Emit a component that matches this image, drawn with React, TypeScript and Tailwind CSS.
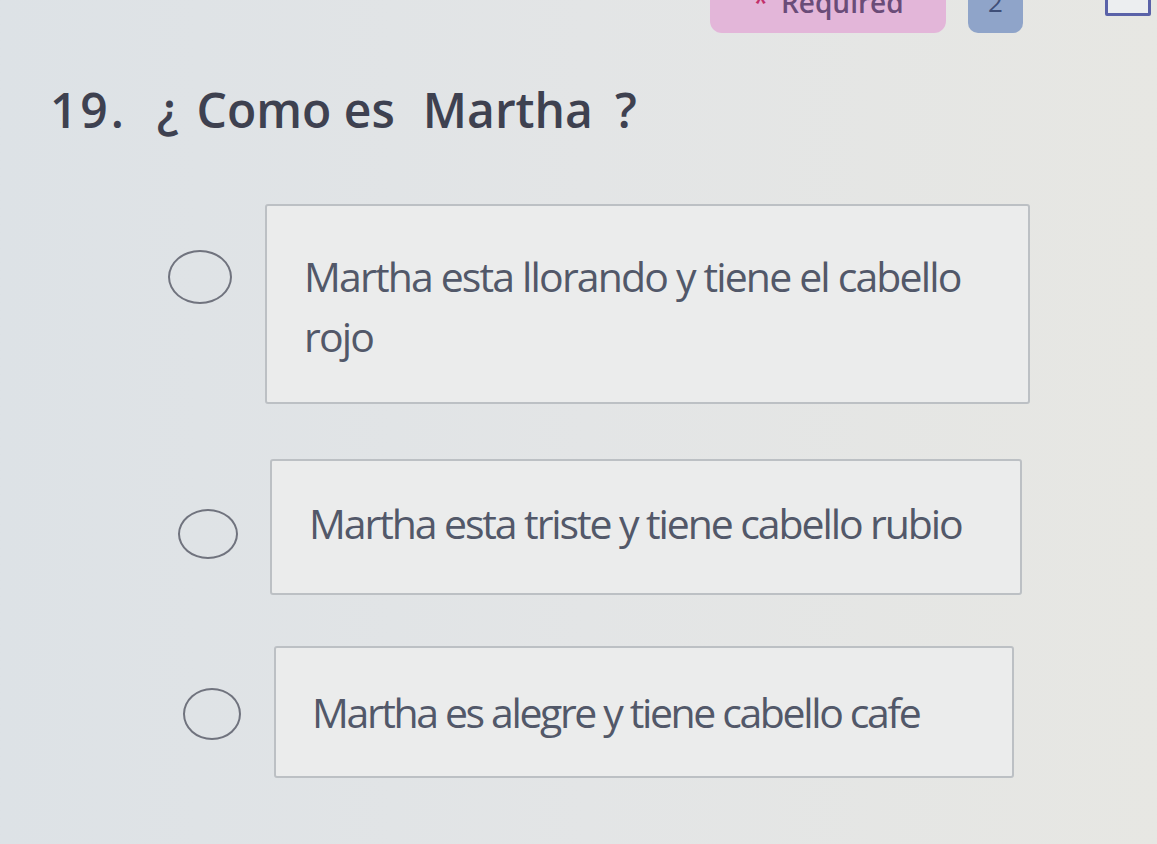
import React from "react";

const options = [
  { lines: ["Martha esta llorando y tiene el cabello", "rojo"], row: "ml-[168px] mt-[22px]", box: "ml-[33px] w-[765px] h-[200px] pt-[40px] pl-[37px] tracking-[-0.045em]", circle: "w-[64px] h-[54px] -mt-[54px]" },
  { lines: ["Martha esta triste y tiene cabello rubio"], row: "ml-[178px] mt-[55px]", box: "ml-[32px] w-[752px] h-[136px] pt-[32px] pl-[37px] tracking-[-0.051em]", circle: "w-[60px] h-[50px] mt-[14px]" },
  { lines: ["Martha es alegre y tiene cabello cafe"], row: "ml-[183px] mt-[51px]", box: "ml-[33px] w-[740px] h-[132px] pt-[34px] pl-[36px] tracking-[-0.058em]", circle: "w-[58px] h-[52px] mt-[4px]" },
];

export default function App() {
  return (
    <div
      className="w-[1157px] h-[844px] overflow-hidden bg-gradient-to-r from-[#dde2e6] via-[#e3e5e6] to-[#e7e7e3]"
      style={{ fontFamily: '"Open Sans", "Noto Sans", sans-serif' }}
    >
      <div className="flex items-start h-[35px]">
        <div className="ml-[710px] -mt-[29px] w-[236px] h-[62px] rounded-[12px] bg-[#e3b6d9] flex items-center justify-center gap-3">
          <span className="text-[30px] text-[#c2306a] leading-none">*</span>
          <span className="text-[28px] font-semibold text-[#6a4c78] leading-none">Required</span>
        </div>
        <div className="ml-[22px] -mt-[29px] w-[55px] h-[62px] rounded-[10px] bg-[#8fa4c9] flex items-center justify-center text-[26px] text-[#3f4f78]">
          2
        </div>
        <div className="ml-[82px] -mt-[20px] w-[46px] h-[36px] border-[3px] border-[#5a62a8] bg-[#eceef0] rounded-[2px]" />
      </div>

      <div className="ml-[50px] mt-[51px] flex items-baseline text-[48px] font-semibold text-[#3e4150] leading-none">
        <span className="tracking-[0.06em]">19.</span>
        <span className="ml-[30px]">¿</span>
        <span className="ml-[18px]">Como es</span>
        <span className="ml-[28px]">Martha</span>
        <span className="ml-[22px]">?</span>
      </div>

      <div className="mt-[48px] flex flex-col">
        {options.map((o, i) => (
          <div key={i} className={`flex items-center ${o.row}`}>
            <div className={`shrink-0 rounded-[50%] border-[2.5px] border-[#70737e] ${o.circle}`} />
            <div
              className={`${o.box} shrink-0 bg-[#ebecec] border-2 border-[#bcc0c4] rounded-[3px] text-[41px] text-[#525869] leading-[60px]`}
            >
              {o.lines.map((l, j) => (
                <div key={j}>{l}</div>
              ))}
            </div>
          </div>
        ))}
      </div>
    </div>
  );
}
